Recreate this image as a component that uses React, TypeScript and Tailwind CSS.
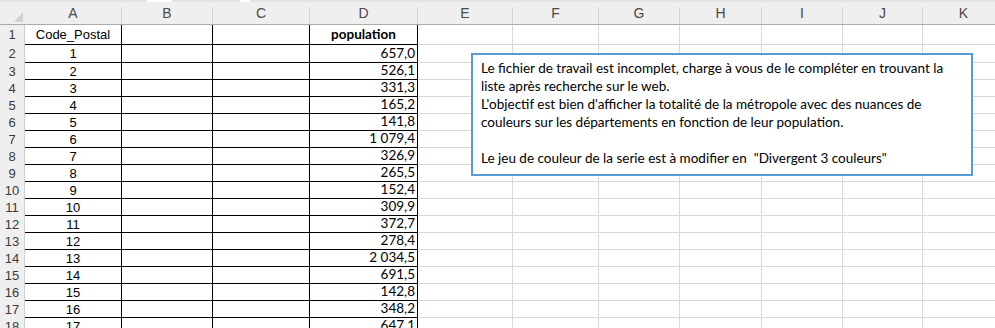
const columns = [
  { label: "A", w: "w-[97px]" },
  { label: "B", w: "w-[91px]" },
  { label: "C", w: "w-[97px]" },
  { label: "D", w: "w-[108px]" },
  { label: "E", w: "w-[95px]" },
  { label: "F", w: "w-[86px]" },
  { label: "G", w: "w-[81px]" },
  { label: "H", w: "w-[82px]" },
  { label: "I", w: "w-[81px]" },
  { label: "J", w: "w-[80px]" },
  { label: "K", w: "w-[82px]" },
]

const population = [
  "657,0", "526,1", "331,3", "165,2", "141,8", "1 079,4", "326,9", "265,5",
  "152,4", "309,9", "372,7", "278,4", "2 034,5", "691,5", "142,8", "348,2",
  "647,1", "120,5",
]

const note = [
  "Le fichier de travail est incomplet, charge à vous de le compléter en trouvant la",
  "liste après recherche sur le web.",
  "L'objectif est bien d'afficher la totalité de la métropole avec des nuances de",
  "couleurs sur les départements en fonction de leur population.",
  "",
  "Le jeu de couleur de la serie est à modifier en  \"Divergent 3 couleurs\"",
]

const arial = "font-['Liberation_Sans',Arial,sans-serif]"
const calibri = "font-['Lato','Liberation_Sans',sans-serif]"

const rowHeight = (n: number) => {
  if (n === 1) return "h-[20px]"
  if (n === 2) return "h-[18px]"
  return "h-[17px]"
}

const Row = ({ n }: { n: number }) => {
  const code = n === 1 ? "Code_Postal" : String(n - 1)
  const pop = n === 1 ? null : population[n - 2]

  return (
    <div className={`flex ${rowHeight(n)}`}>
      <div className={`w-[25px] shrink-0 flex items-center justify-center bg-[#efefef] border-r border-[#d0d0d0] text-[13px] text-[#3a3a3a] ${arial}`}>
        {n}
      </div>
      {columns.map((col, i) => {
        const boxed = i < 4
        const border = boxed
          ? "border-r border-b border-black"
          : "border-r border-b border-[#dadada]"
        let content = null
        if (i === 0) {
          content = (
            <span className={`w-full text-center text-[13px] text-black ${arial}`}>{code}</span>
          )
        } else if (i === 3) {
          content = n === 1 ? (
            <span className={`w-full text-center text-[13.5px] font-bold text-black ${calibri}`}>population</span>
          ) : (
            <span className={`w-full text-right pr-[2px] text-[13.5px] text-black ${calibri}`}>{pop}</span>
          )
        }
        return (
          <div key={col.label} className={`${col.w} shrink-0 flex items-center leading-none ${border}`}>
            {content}
          </div>
        )
      })}
    </div>
  )
}

export default function App() {
  const rows = Array.from({ length: 19 }, (_, i) => i + 1)

  return (
    <div className="relative w-[995px] h-[328px] overflow-hidden bg-white">
      {/* ribbon edge */}
      <div className="flex h-[2px]">
        <div className="w-[147px] bg-[#e3e3e3]" />
        <div className="w-[25px]" />
        <div className="w-[68px] bg-[#e3e3e3]" />
        <div className="w-[10px]" />
        <div className="flex-1 bg-[#e3e3e3]" />
      </div>

      {/* column letters */}
      <div className="flex h-[23px] bg-[#efefef] border-b border-[#acacac]">
        <div className="w-[25px] shrink-0 flex items-end justify-end pr-[2px] pb-[2px]">
          <svg width="9" height="10" viewBox="0 0 9 10">
            <polygon points="9,0 9,10 0,10" fill="#d2d2d2" />
          </svg>
        </div>
        {columns.map((col) => (
          <div key={col.label} className={`${col.w} shrink-0 flex`}>
            <div className={`flex-1 flex items-center justify-center text-[14px] text-[#4a4a4a] ${arial}`}>
              {col.label}
            </div>
            <div className="w-px mt-[5px] bg-[#d4d4d4]" />
          </div>
        ))}
      </div>

      {rows.map((n) => (
        <Row key={n} n={n} />
      ))}

      {/* floating text box */}
      <div className={`absolute left-[471px] top-[53px] w-[502px] h-[123px] border-2 border-[#5b9bd5] bg-white pl-[8px] pt-[4px] text-[13.5px] leading-[18px] text-black ${calibri}`}>
        {note.map((line, i) => (
          <div key={i} className="h-[18px] whitespace-pre">{line}</div>
        ))}
      </div>
    </div>
  )
}
